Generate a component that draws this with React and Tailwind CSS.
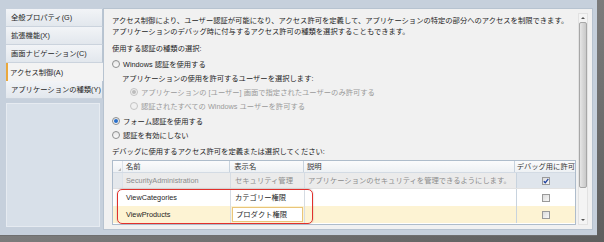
import React from "react";

const font = { fontFamily: '"Liberation Sans", "Noto Sans CJK JP", sans-serif' };

const tabs = [
    "全般プロパティ(G)",
    "拡張機能(X)",
    "画面ナビゲーション(C)",
    "アクセス制御(A)",
    "アプリケーションの種類(Y)",
];

function Radio({ checked, disabled }) {
    return (
        <span
            className={`inline-flex items-center justify-center w-[8px] h-[8px] rounded-full border mr-[3px] shrink-0 ${
                disabled ? "border-[#c4c4c4] bg-[#f0f0f0]" : "border-[#8e8f8f] bg-gradient-to-b from-[#e6e6e6] to-[#fbfbfb]"
            }`}
        >
            {checked && <span className={`w-[4px] h-[4px] rounded-full ${disabled ? "bg-[#bcbcbc]" : "bg-[#2a6fc9]"}`} />}
        </span>
    );
}

function Check({ checked }) {
    return (
        <span className="inline-flex items-center justify-center w-[8px] h-[8px] border border-[#9a9a9a] bg-gradient-to-br from-[#dcdcdc] to-[#f8f8f8]">
            {checked && (
                <svg width="6" height="6" viewBox="0 0 6 6">
                    <path d="M0.8 3.2 L2.3 4.8 L5.3 0.9" fill="none" stroke="#1c3f9e" strokeWidth="1.3" />
                </svg>
            )}
        </span>
    );
}

export default function App() {
    return (
        <div className="w-[604px] h-[242px] bg-gradient-to-br from-[#9a9a9a] to-[#5e5e5e] text-[7.3px] leading-[11px] text-[#1e1e1e]" style={font}>
            <div className="w-[597px] h-[236px] bg-[#c6d0dc] flex pt-[8px] pb-[5px] pr-[4px] border-b border-[#6f6f6f]">
                {/* Tabs */}
                <div className="w-[103px] pl-[6px] flex flex-col pt-[1px]">
                    {tabs.map((t, i) =>
                        i === 3 ? (
                            <div key={t} className="h-[18px] flex items-center pl-[2px] bg-[#f3f3f3] border-l-2 border-[#eaa83c]">
                                {t}
                            </div>
                        ) : (
                            <div key={t} className="h-[18px] flex items-center pl-[5px] bg-gradient-to-b from-[#f2f4f7] to-[#e2e7ed] border-b border-[#cbd3dd] border-r border-r-[#b9c5d2]">
                                {t}
                            </div>
                        )
                    )}
                    <div className="flex-1 mt-[4px] mr-[3px] mb-[3px] bg-[#d8e0e9] border border-[#e6ebf1]" />
                </div>

                {/* Content panel */}
                <div className="flex-1 flex bg-[#f1f1f1] border border-[#b7c3d0] overflow-hidden">
                    <div className="flex-1 pl-[8px] pr-[2px] pt-[6px] flex flex-col">
                        <div>アクセス制御により、ユーザー認証が可能になり、アクセス許可を定義して、アプリケーションの特定の部分へのアクセスを制限できます。</div>
                        <div>アプリケーションのデバッグ時に付与するアクセス許可の種類を選択することもできます。</div>
                        <div className="mt-[6px]">使用する認証の種類の選択:</div>
                        <div className="mt-[3px] h-[14px] flex items-center"><Radio />Windows 認証を使用する</div>
                        <div className="h-[14px] flex items-center pl-[10px]">アプリケーションの使用を許可するユーザーを選択します:</div>
                        <div className="h-[14px] flex items-center pl-[18px] text-[#9a9a9a]"><Radio checked disabled />アプリケーションの [ユーザー] 画面で指定されたユーザーのみ許可する</div>
                        <div className="h-[14px] flex items-center pl-[18px] text-[#9a9a9a]"><Radio disabled />認証されたすべての Windows ユーザーを許可する</div>
                        <div className="mt-[1px] h-[14px] flex items-center"><Radio checked />フォーム認証を使用する</div>
                        <div className="h-[14px] flex items-center"><Radio />認証を有効にしない</div>
                        <div className="mt-[2px] h-[14px] flex items-center">デバッグに使用するアクセス許可を定義または選択してください:</div>

                        {/* Grid */}
                        <div className="relative mt-[2px] w-[464px] h-[65px] shrink-0 border border-[#aebccb] bg-white overflow-hidden">
                            <div className="flex h-[12px] bg-gradient-to-b from-[#fbfbfc] to-[#eef1f4] border-b border-[#d3dbe4] text-[#333]">
                                <div className="w-[10px] flex items-end justify-end pb-[1px] pr-[1px] border-r border-[#dce3ea]">
                                    <span className="w-0 h-0 border-l-[3px] border-l-transparent border-b-[3px] border-b-[#b8b8b8]" />
                                </div>
                                <div className="w-[108px] pl-[3px] flex items-center border-r border-[#c8d3de]">名前</div>
                                <div className="w-[74px] pl-[4px] flex items-center border-r border-[#c8d3de]">表示名</div>
                                <div className="w-[212px] pl-[3px] flex items-center border-r border-[#c8d3de]">説明</div>
                                <div className="flex-1 pl-[2px] flex items-center whitespace-nowrap">デバッグ用に許可</div>
                            </div>
                            <div className="flex h-[16px] bg-[#ebebeb] text-[#8c8c8c] border-b border-[#e2e2e2]">
                                <div className="w-[10px] bg-[#e4e8ec] border-r border-[#dce3ea]" />
                                <div className="w-[108px] pl-[3px] flex items-center border-r border-[#d6dce3]">SecurityAdministration</div>
                                <div className="w-[74px] pl-[4px] flex items-center border-r border-[#d6dce3]">セキュリティ管理</div>
                                <div className="w-[212px] pl-[3px] flex items-center border-r border-[#c8d3de] whitespace-nowrap">アプリケーションのセキュリティを管理できるようにします。</div>
                                <div className="flex-1 flex items-center justify-center bg-[#dfe5ec]"><Check checked /></div>
                            </div>
                            <div className="flex h-[17px] bg-white">
                                <div className="w-[10px]" />
                                <div className="w-[108px] pl-[3px] flex items-center border-r border-[#d6dce3]">ViewCategories</div>
                                <div className="w-[74px] pl-[4px] flex items-center border-r border-[#d6dce3]">カテゴリー権限</div>
                                <div className="w-[212px] border-r border-[#c8d3de]" />
                                <div className="flex-1 flex items-center justify-center"><Check /></div>
                            </div>
                            <div className="flex h-[17px] bg-[#fdf3d3]">
                                <div className="w-[10px]" />
                                <div className="w-[108px] pl-[3px] flex items-center border-r border-[#d6dce3]">ViewProducts</div>
                                <div className="w-[74px] px-[1px] py-[1px] flex border-r border-[#d6dce3]">
                                    <div className="flex-1 flex items-center pl-[3px] bg-white border border-[#e9c57a]">プロダクト権限</div>
                                </div>
                                <div className="w-[212px] border-r border-[#c8d3de]" />
                                <div className="flex-1 flex items-center justify-center"><Check /></div>
                            </div>
                            <div className="absolute left-[4px] top-[28px] w-[196px] h-[35px] rounded-[5px] border-[1.5px] border-[#e2302c] shadow-[0_0_2px_rgba(0,0,0,0.25)]" />
                        </div>
                    </div>

                    {/* Scrollbar */}
                    <div className="w-[10px] mr-[4px] my-[4px] flex flex-col items-center bg-[#f4f4f4] border border-[#e2e2e2]">
                        <div className="h-[8px] flex items-center justify-center">
                            <span className="w-0 h-0 border-l-[2px] border-r-[2px] border-l-transparent border-r-transparent border-b-[2px] border-b-[#555]" />
                        </div>
                        <div className="w-[8px] h-[166px] rounded-[2px] border border-[#a7a7a7] bg-gradient-to-r from-[#e6e6e6] via-[#d6d6d6] to-[#c9c9c9]" />
                        <div className="flex-1" />
                        <div className="h-[8px] flex items-center justify-center">
                            <span className="w-0 h-0 border-l-[2px] border-r-[2px] border-l-transparent border-r-transparent border-t-[2px] border-t-[#555]" />
                        </div>
                    </div>
                </div>
            </div>
        </div>
    );
}
